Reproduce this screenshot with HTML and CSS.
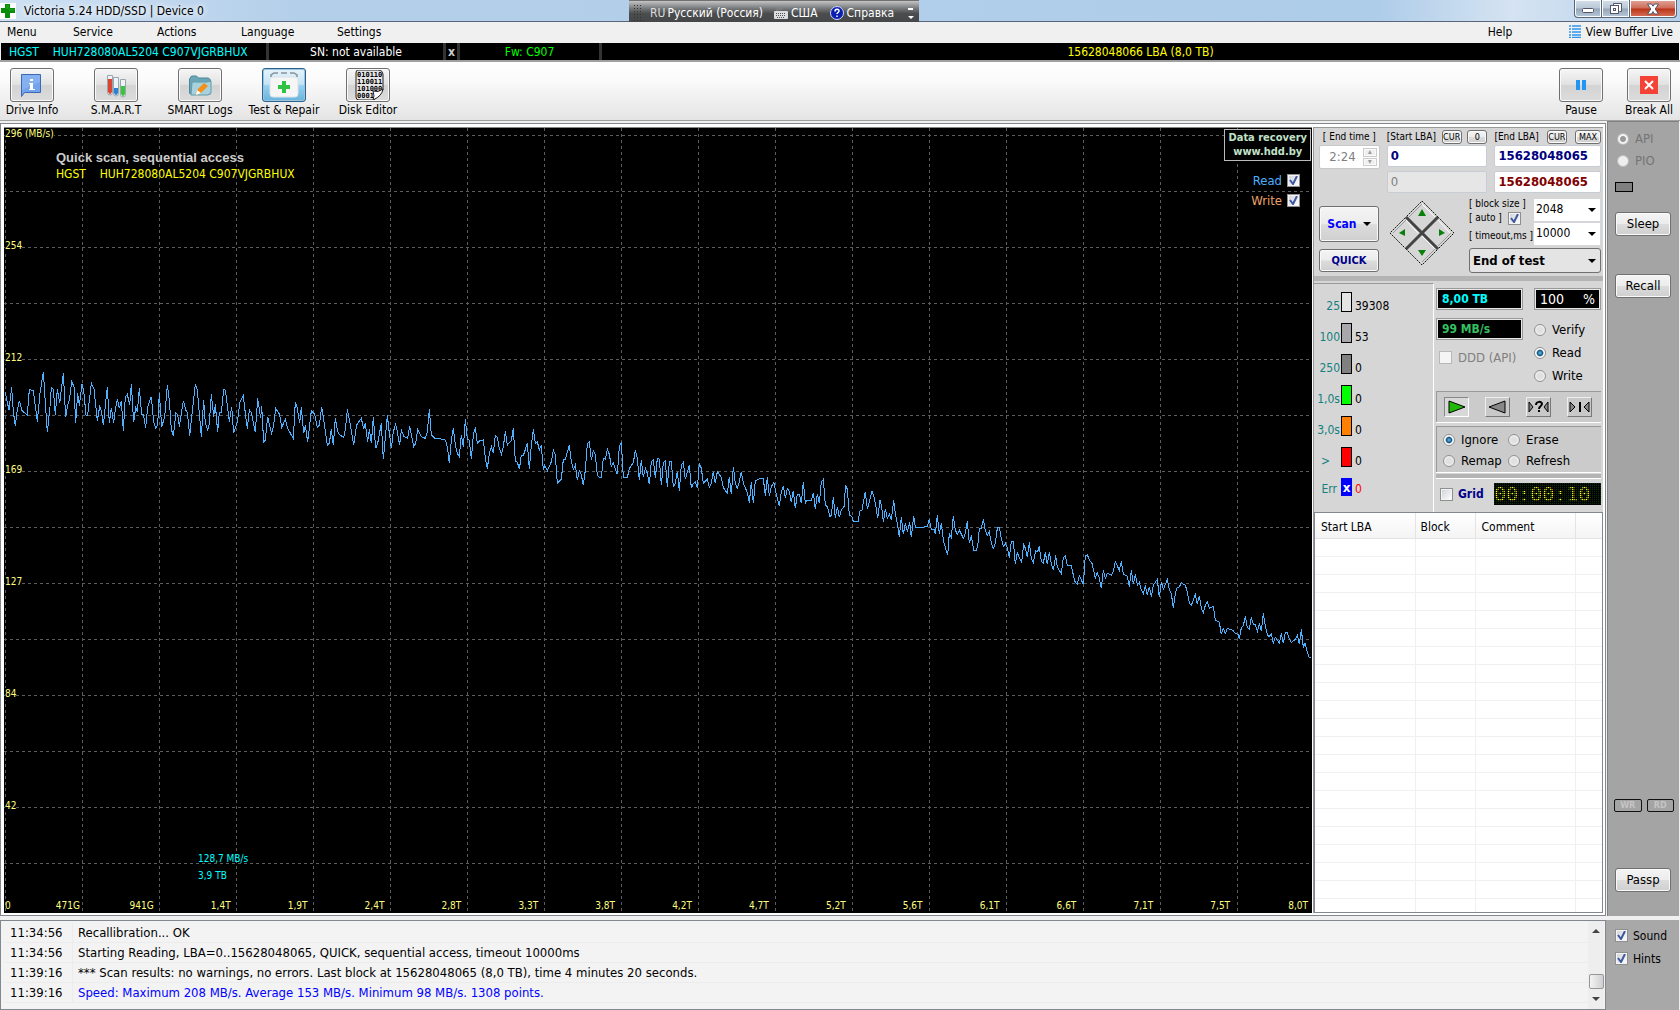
FILE: index.html
```html
<!DOCTYPE html>
<html lang="en">
<head>
  <meta charset="UTF-8">
  <meta name="viewport" content="width=device-width, initial-scale=1.0">
  <title>Victoria 5.24 HDD/SSD</title>
  <link rel="stylesheet" href="styles.css">
</head>
<body>
  <header class="titlebar">
    <svg class="app-icon" width="16" height="16" viewBox="0 0 16 16"><rect width="16" height="16" fill="#fff"/><path d="M5 1h5v4h5v5h-5v5H5v-5H1V5h4z" fill="#0a8a0a"/><path d="M6 2h3v4h5v2H9V6H6z" fill="#12a012"/></svg>
    <span class="title">Victoria 5.24 HDD/SSD | Device 0</span>
    <div class="langbar">
      <span class="grip"></span>
      <span class="lang-code">RU</span>
      <span>Русский (Россия)</span>
      <svg class="keyboard" width="14" height="14" viewBox="0 0 14 14"><path d="M3 5V3h5V1h4" fill="none" stroke="#888"/><rect x="0" y="5" width="14" height="8" rx="1" fill="#ddd"/><path d="M2 7.500h10M2 9.500h10M3 11.500h8" stroke="#555" stroke-dasharray="1 1"/></svg>
      <span>США</span>
      <svg class="help-icon" width="14" height="14" viewBox="0 0 14 14"><circle cx="7" cy="7" r="6.500" fill="#0b1fae" stroke="#cdd6ff"/><path d="M5 5.500c0-3 4-3 4-.5 0 1.500-2 1.500-2 3M7 9.500V11" fill="none" stroke="#fff" stroke-width="1.500"/></svg>
      <span>Справка</span>
      <svg class="lang-more" width="6" height="14" viewBox="0 0 6 14"><path d="M0 2h5v2H0zM0 10h6l-3 3z" fill="#fff"/></svg>
    </div>
    <div class="window-buttons">
      <button class="win" aria-label="Minimize"><svg width="14" height="14" viewBox="0 0 14 14"><rect x="1.500" y="6.500" width="11" height="4" rx="1" fill="#fff" stroke="#535666"/></svg></button>
      <button class="win" aria-label="Restore"><svg width="14" height="14" viewBox="0 0 14 14"><path d="M4.500 3.500v-2h8v8h-2" fill="#fff" stroke="#535666"/><rect x="1.500" y="3.500" width="8" height="8" fill="#fff" stroke="#535666"/><rect x="4.500" y="6.500" width="2" height="2" fill="none" stroke="#535666"/></svg></button>
      <button class="win close" aria-label="Close"><svg width="14" height="14" viewBox="0 0 14 14"><path d="M1.500 2h4L7 4.200 8.500 2h4L9.200 7l3.300 5h-4L7 9.600 5.500 12h-4L4.800 7z" fill="#fff" stroke="#535666"/></svg></button>
    </div>
  </header>

  <nav class="menu">
    <a href="#">Menu</a>
    <a href="#">Service</a>
    <a href="#">Actions</a>
    <a href="#">Language</a>
    <a href="#">Settings</a>
    <a href="#" class="help">Help</a>
    <a href="#" class="buffer"><svg width="12" height="13" viewBox="0 0 12 13"><path d="M0 1h2M3 1h9M0 4h2M3 4h9M0 7h2M3 7h9M0 10h2M3 10h9M0 12.500h2M3 12.500h9" stroke="#2b95f0" stroke-width="1.500"/></svg>View Buffer Live</a>
  </nav>

  <div class="drive-strip">
    <div class="model">HGST &nbsp;&nbsp; HUH728080AL5204 C907VJGRBHUX</div>
    <div class="serial">SN: not available</div>
    <div class="strip-x">x</div>
    <div class="firmware">Fw: C907</div>
    <div class="capacity">15628048066 LBA (8,0 TB)</div>
  </div>

  <div class="toolbar">
    <div class="tool">
      <button id="info" aria-labelledby="info-l"><svg width="40" height="30" viewBox="0 0 40 30"><path d="M9.500 4.500h19v18h-16l-3 4z" fill="#72a3ec" stroke="#3c68b4"/><path d="M10 5h18v7L10 20z" fill="#9abff6" opacity=".5"/><path d="M18 9h3v2h-3zM17 13h4v6h2v1h-6v-1h1v-5h-1z" fill="#fff"/></svg></button>
      <label id="info-l" for="info">Drive Info</label>
    </div>
    <div class="tool">
      <button id="smart" aria-labelledby="smart-l"><svg width="40" height="30" viewBox="0 0 40 30"><g fill="#eef3f6" stroke="#98a6b0"><path d="M11.500 5.500h5v17a2 2 0 0 1-5 0z"/><path d="M17.500 7.500h5v16a2 2 0 0 1-5 0z"/><path d="M24.500 9.500h5v15a2 2 0 0 1-5 0z"/></g><path d="M12 9h4v13q-2 4-4 0z" fill="#dc4433"/><path d="M18 18h4v5q-2 4-4 0z" fill="#2e7fd6"/><path d="M25 16h4v8q-2 4-4 0z" fill="#3cc43c"/></svg></button>
      <label id="smart-l" for="smart">S.M.A.R.T</label>
    </div>
    <div class="tool">
      <button id="logs" aria-labelledby="logs-l"><svg width="40" height="30" viewBox="0 0 40 30"><path d="M9.500 23V9l2-3h5l2 2h10l2 2v14h-20z" fill="#6aa6b8" stroke="#4b8799"/><path d="M12 12h15l4-1v12l-3 2H11z" fill="#a7d1dc" stroke="#5f9cac"/><path d="M16 25l1-5 7-7 4 3-7 7z" fill="#f58f1c"/><path d="M16 25l1-5 4 3z" fill="#fff"/></svg></button>
      <label id="logs-l" for="logs">SMART Logs</label>
    </div>
    <div class="tool">
      <button id="test" class="active" aria-labelledby="test-l"><svg width="40" height="30" viewBox="0 0 40 30"><path d="M7 7v-2l3-2h4m3 0h6m3 0h4l3 2v2" fill="none" stroke="#8a9299" stroke-width="1.500"/><rect x="6" y="7" width="28" height="20" rx="3" fill="#f6f6f6" stroke="#dde3e8"/><path d="M18 11h4v4h4v4h-4v4h-4v-4h-4v-4h4z" fill="#2fc343"/></svg></button>
      <label id="test-l" for="test">Test &amp; Repair</label>
    </div>
    <div class="tool">
      <button id="editor" aria-labelledby="editor-l"><svg width="40" height="30" viewBox="0 0 40 30"><path d="M10 0h20q5 0 5 5v15l-9 10H11q-3 0-3-3V3q0-3 2-3z" fill="#e6e6e6" stroke="#222"/><g class="bits"><text x="9" y="7">010110</text><text x="9" y="14">110011</text><text x="9" y="21">101000</text><text x="9" y="28">0001</text></g><path d="M25 30q2-4 0-9 5 2 10-2-1 7-10 11z" fill="#fff" stroke="#222"/></svg></button>
      <label id="editor-l" for="editor">Disk Editor</label>
    </div>
    <div class="tool pause">
      <button id="pause" aria-labelledby="pause-l"><svg width="40" height="30" viewBox="0 0 40 30"><path d="M15 10h4v10h-4zM21 10h4v10h-4z" fill="#2196f3"/></svg></button>
      <label id="pause-l" for="pause">Pause</label>
    </div>
    <div class="tool break">
      <button id="break" aria-labelledby="break-l"><svg width="40" height="30" viewBox="0 0 40 30"><rect x="11" y="6" width="18" height="18" fill="#f44336"/><path d="M16 11l8 8M24 11l-8 8" stroke="#fff" stroke-width="2"/></svg></button>
      <label id="break-l" for="break">Break All</label>
    </div>
  </div>

  <main class="main">
    <div class="workspace">
      <section class="chart">
        <!-- plot units are thirds of a pixel; grid step is 77 x 56 px -->
        <svg class="plot" viewBox="0 0 3924 2355" preserveAspectRatio="none">
          <path class="grid" d="M4 0V2355M235 0V2355M466 0V2355M697 0V2355M928 0V2355M1159 0V2355M1390 0V2355M1621 0V2355M1852 0V2355M2083 0V2355M2314 0V2355M2545 0V2355M2776 0V2355M3007 0V2355M3238 0V2355M3469 0V2355M3700 0V2355M0 22H3924M0 190H3924M0 358H3924M0 526H3924M0 694H3924M0 862H3924M0 1030H3924M0 1198H3924M0 1366H3924M0 1534H3924M0 1702H3924M0 1870H3924M0 2038H3924M0 2206H3924"/>
          <polyline class="speed" transform="translate(-12 696)" points="16,95 20,118 27,150 35,82 40,155 46,198 50,160 58,122 66,152 82,165 88,88 100,92 112,185 120,100 130,35 136,130 142,217 150,140 154,83 160,88 166,165 172,88 179,130 190,40 197,170 202,140 208,120 215,65 222,80 227,190 233,100 238,137 246,73 251,90 258,165 263,165 274,70 282,88 292,182 299,140 305,155 310,196 322,80 328,190 334,143 341,190 346,148 352,118 358,145 364,122 370,212 376,110 382,103 389,135 394,73 401,187 407,143 412,155 418,85 425,163 430,163 437,203 443,140 454,110 461,187 467,205 473,193 478,98 485,200 494,172 502,76 508,120 514,208 520,227 528,158 533,165 538,200 550,122 557,150 562,157 569,227 578,145 586,73 592,90 604,230 611,120 616,190 623,210 628,190 634,102 641,170 646,133 653,217 658,158 664,157 671,88 676,90 688,185 695,140 701,220 712,185 720,125 730,107 736,160 742,206 748,150 754,158 766,217 773,115 782,175 785,137 791,247 796,240 803,170 808,195 815,220 821,195 827,145 839,163 845,203 856,178 862,203 880,236 886,125 892,145 899,190 904,142 911,220 916,195 923,247 934,152 944,163 952,203 958,195 965,140 971,178 982,256 988,250 994,208 1000,255 1006,175 1013,214 1019,225 1031,232 1036,210 1042,148 1048,178 1061,256 1070,195 1084,175 1091,208 1096,190 1103,245 1108,208 1114,250 1120,172 1127,265 1133,250 1144,190 1150,298 1162,166 1168,220 1174,265 1180,215 1187,193 1192,215 1199,256 1204,211 1212,230 1223,235 1229,199 1241,260 1247,250 1253,208 1264,230 1276,235 1282,215 1288,148 1294,225 1303,234 1320,235"/>
          <polyline class="speed" transform="translate(1308 786)" points="0,146 16,150 22,170 28,220 34,150 40,115 46,165 52,190 58,200 64,135 70,172 76,88 82,148 88,150 94,208 100,135 106,112 112,160 118,153 130,150 136,205 142,236 148,190 154,170 160,190 166,136 172,143 178,175 184,193 190,170 196,124 202,165 214,152 220,115 226,215 232,216 238,238 244,195 250,197 262,160 268,238 274,165 280,118 286,160 292,155 298,180 304,165 310,241 314,225 322,243 334,215 340,181 346,195 352,280 364,268 370,208 376,208 388,165 394,215 400,238 406,225 412,271 418,242 424,255 430,286 436,240 442,162 448,155 454,211 460,182 466,195 472,257 478,262 484,262 490,205 496,207 502,178 508,193 514,230 520,218 526,237 532,253 538,170 544,157 550,262 562,263 568,235 580,218 586,181 592,205 598,271 604,210 610,262 616,235 622,250 628,283 634,215 640,210 646,265 652,205 658,208 664,286 670,218 676,213 682,290 688,215 694,215 700,290 706,280 712,245 718,304 724,225 730,217 736,268 748,225 754,295 760,280 766,275 772,295 778,220 784,235 790,280 802,268 808,292 814,280 820,245 826,280 832,245 844,262 850,293 862,310 868,260 874,313 880,230 886,280 892,295 898,275 904,245 910,280 922,308 928,338 934,275 940,340 946,272 958,267 970,266 976,317 982,262 988,317 994,290 1002,278 1008,310 1018,348 1024,305 1030,287 1036,325 1042,295 1048,305 1054,337 1060,302 1066,355 1072,312 1078,312 1084,340 1090,275 1096,340 1102,330 1114,332 1120,308 1126,358 1132,312 1138,340 1144,275 1150,268 1156,345 1162,350 1170,382 1174,375 1180,320 1186,385 1192,350 1198,382 1204,360 1212,350 1217,284 1222,298 1228,375 1236,380 1240,395 1254,395 1260,362 1266,360 1276,305 1282,357 1288,335 1296,302 1302,320 1308,350 1313,385 1320,330"/>
          <polyline class="speed" transform="translate(2628 996)" points="0,120 5,140 10,187 16,148 22,175 28,163 34,180 41,121 46,162 52,190 58,232 64,170 70,223 76,190 82,215 89,187 94,232 101,168 106,203 125,202 142,200 148,178 154,210 162,207 166,222 172,166 178,222 184,190 190,240 196,263 203,286 208,220 214,232 220,168 226,210 232,223 238,210 250,235 256,220 262,184 268,250 274,226 281,272 288,273 293,260 298,206 304,205 310,178 316,212 322,226 328,215 334,250 340,265 346,250 352,204 358,203 364,235 370,260 376,250 382,263 388,293 394,245 400,244 406,313 412,278 418,293 425,307 431,253 436,265 442,292 448,247 454,295 460,307 467,273 473,275 478,259 484,305 490,310 496,277 502,313 508,277 514,313 520,331 527,286 532,322 544,340 550,292 556,287 562,317 574,317 580,345 586,368 592,373 598,347 604,360 610,373 616,287 622,284 628,300 636,310 646,355 652,338 658,355 664,385 670,331 676,355 682,340 694,345 700,335 706,305 718,331 724,304 730,343 742,349 748,380 754,331 760,372 766,343 772,375 778,367 784,390 790,401 796,376 802,406 808,380 814,410 820,376 832,358 838,412 844,366 850,388 862,358 868,388 874,400 880,445 886,400 892,382 898,381 904,368 916,376 922,395 928,430 934,436 946,404 952,433 958,407 964,445 970,457 976,436 982,425 988,445 1000,439 1006,480 1018,487 1024,523 1030,506 1036,520 1042,505 1060,512 1066,521 1074,523 1078,538 1084,503 1090,497 1096,469 1102,503 1108,508 1114,472 1120,493 1126,493 1132,514 1138,490 1144,514 1150,460 1156,497 1162,524 1168,530 1174,521 1180,550 1186,532 1198,550 1204,520 1210,550 1216,518 1222,517 1228,538 1234,547 1246,538 1252,526 1258,553 1264,508 1270,562 1275,550 1282,578 1288,592 1292,593"/>
        </svg>
        <div class="y-axis">
          <span>296 (MB/s)</span><span>254</span><span>212</span><span>169</span><span>127</span><span>84</span><span>42</span>
        </div>
        <div class="x-axis">
          <span class="first"><span>0</span>471G</span><span>941G</span><span>1,4T</span><span>1,9T</span><span>2,4T</span><span>2,8T</span><span>3,3T</span><span>3,8T</span><span>4,2T</span><span>4,7T</span><span>5,2T</span><span>5,6T</span><span>6,1T</span><span>6,6T</span><span>7,1T</span><span>7,5T</span><span class="last">8,0T</span>
        </div>
        <div class="chart-title">
          <strong>Quick scan, sequential access</strong>
          <span>HGST &nbsp;&nbsp; HUH728080AL5204 C907VJGRBHUX</span>
        </div>
        <div class="legend">
          <a href="#" class="promo">Data recovery<br>www.hdd.by</a>
          <label class="l-read">Read <input type="checkbox" checked></label>
          <label class="l-write">Write <input type="checkbox" checked></label>
        </div>
        <div class="cursor-info">128,7 MB/s<br>3,9 TB</div>
      </section>

      <aside class="controls">
        <section class="scan-panel">
          <div class="lba">
            <div class="col time">
              <div class="head"><label for="endtime">[ End time ]</label></div>
              <div class="spin">
                <input id="endtime" type="text" value="2:24" disabled>
                <div class="spin-buttons"><button disabled aria-label="Up">▴</button><button disabled aria-label="Down">▾</button></div>
              </div>
            </div>
            <div class="col start">
              <div class="head"><label for="start">[Start LBA]</label><button class="mini">CUR</button><button class="mini">0</button></div>
              <input id="start" class="num" type="text" value="0">
              <input class="num" type="text" value="0" aria-label="Current start" disabled>
            </div>
            <div class="col end">
              <div class="head"><label for="end">[End LBA]</label><button class="mini">CUR</button><button class="mini max">MAX</button></div>
              <input id="end" class="num" type="text" value="15628048065">
              <input class="num red" type="text" value="15628048065" aria-label="Last LBA">
            </div>
          </div>
          <div class="scan-row">
            <div class="scan-buttons">
              <button class="scan">Scan <i class="caret"></i></button>
              <button class="quick">QUICK</button>
            </div>
            <svg class="diamond" width="66" height="66" viewBox="0 0 66 66">
              <g fill="#d6d6d6" stroke="#111" stroke-dasharray="2 1"><path d="M33 1l16 16-16 16-16-16z"/><path d="M49 17l16 16-16 16-16-16z"/><path d="M17 17l16 16-16 16L1 33z"/><path d="M33 33l16 16-16 16-16-16z"/></g>
              <path d="M17 17l32 32M49 17L17 49" stroke="#444" stroke-width="3"/>
              <path d="M17 20l12 13M33 4l13 13M49 20l12 13M33 36l13 13" stroke="#fff" fill="none"/>
              <path d="M4 33l13-13M20 17L33 4M33 62l13-13M49 46l13-13" stroke="#999" fill="none"/>
              <path d="M33 9l4 7h-8zM33 56l4-6h-8zM10 33l6-4v7zM56 33l-6-4v7z" fill="#0a800a"/>
            </svg>
            <div class="options">
              <div class="option-grid">
                <div class="option-labels">
                  <label for="block">[ block size ]</label>
                  <label>[ auto ] <input type="checkbox" checked></label>
                  <label for="timeout">[ timeout,ms ]</label>
                </div>
                <div class="option-fields">
                  <select id="block"><option>2048</option></select>
                  <select id="timeout"><option>10000</option></select>
                </div>
              </div>
              <select class="finish" aria-label="After scan"><option>End of test</option></select>
            </div>
          </div>
        </section>

        <section class="status-panel">
          <div class="counters">
            <div class="counter"><span class="ms">25</span><i class="box b25"></i><span>39308</span></div>
            <div class="counter"><span class="ms">100</span><i class="box b100"></i><span>53</span></div>
            <div class="counter"><span class="ms">250</span><i class="box b250"></i><span>0</span></div>
            <div class="counter"><span class="ms">1,0s</span><i class="box b1s"></i><span>0</span></div>
            <div class="counter"><span class="ms">3,0s</span><i class="box b3s"></i><span>0</span></div>
            <div class="counter"><span class="ms gt">&gt;</span><i class="box bover"></i><span>0</span></div>
            <div class="counter err"><span class="ms">Err</span><i class="box berr">x</i><span>0</span></div>
          </div>
          <div class="run">
            <div class="run-top">
              <div class="readouts">
                <div class="lcd cyan">8,00 TB</div>
                <div class="lcd green">99 MB/s</div>
                <label class="ddd"><input type="checkbox" disabled>DDD (API)</label>
              </div>
              <div class="modes">
                <div class="lcd percent"><span>100</span><span>%</span></div>
                <label><input type="radio" name="mode">Verify</label>
                <label><input type="radio" name="mode" checked>Read</label>
                <label><input type="radio" name="mode">Write</label>
              </div>
            </div>
            <div class="group player">
              <button class="down" aria-label="Forward"><svg width="21" height="16" viewBox="0 0 21 16"><path d="M3 2l16 6-16 6z" fill="#22b80a" stroke="#000"/></svg></button>
              <button aria-label="Backward"><svg width="21" height="16" viewBox="0 0 21 16"><path d="M18 2L2 8l16 6z" fill="#888" stroke="#000"/></svg></button>
              <button aria-label="Random"><svg width="21" height="16" viewBox="0 0 21 16"><path d="M1 3l4 5-4 5zM20 3l-4 5 4 5z" fill="#888" stroke="#000"/><path d="M8 6c0-4 6-4 6-1 0 2-3 2-3 5M11 11v2" fill="none" stroke="#000" stroke-width="2"/></svg></button>
              <button aria-label="Butterfly"><svg width="21" height="16" viewBox="0 0 21 16"><path d="M1 3l5 5-5 5zM20 3l-5 5 5 5z" fill="#888" stroke="#000"/><path d="M10 3h2v10h-2z"/></svg></button>
            </div>
            <div class="group actions">
              <label><input type="radio" name="action" checked>Ignore</label>
              <label><input type="radio" name="action">Erase</label>
              <label><input type="radio" name="action">Remap</label>
              <label><input type="radio" name="action">Refresh</label>
            </div>
            <div class="band"></div>
            <div class="grid-row">
              <label><input type="checkbox">Grid</label>
              <div class="clock">00:00:10</div>
            </div>
          </div>
        </section>

        <div class="defects">
          <table>
            <thead><tr><th class="c1">Start LBA</th><th class="c2">Block</th><th class="c3">Comment</th><th></th></tr></thead>
            <tbody>
              <tr><td></td><td></td><td></td><td></td></tr><tr><td></td><td></td><td></td><td></td></tr><tr><td></td><td></td><td></td><td></td></tr><tr><td></td><td></td><td></td><td></td></tr><tr><td></td><td></td><td></td><td></td></tr>
              <tr><td></td><td></td><td></td><td></td></tr><tr><td></td><td></td><td></td><td></td></tr><tr><td></td><td></td><td></td><td></td></tr><tr><td></td><td></td><td></td><td></td></tr><tr><td></td><td></td><td></td><td></td></tr>
              <tr><td></td><td></td><td></td><td></td></tr><tr><td></td><td></td><td></td><td></td></tr><tr><td></td><td></td><td></td><td></td></tr><tr><td></td><td></td><td></td><td></td></tr><tr><td></td><td></td><td></td><td></td></tr>
              <tr><td></td><td></td><td></td><td></td></tr><tr><td></td><td></td><td></td><td></td></tr><tr><td></td><td></td><td></td><td></td></tr><tr><td></td><td></td><td></td><td></td></tr><tr><td></td><td></td><td></td><td></td></tr>
              <tr><td></td><td></td><td></td><td></td></tr>
            </tbody>
          </table>
        </div>
      </aside>
    </div>

    <aside class="side">
      <label><input type="radio" name="io" checked disabled>API</label>
      <label><input type="radio" name="io" disabled>PIO</label>
      <i class="led"></i>
      <button class="sleep">Sleep</button>
      <button class="recall">Recall</button>
      <div class="leds"><span>WR</span><span>RD</span></div>
      <button class="passp">Passp</button>
    </aside>
  </main>

  <footer class="bottom">
    <div class="log">
      <div class="log-lines">
        <div class="line"><time>11:34:56</time><span>Recallibration... OK</span></div>
        <div class="line"><time>11:34:56</time><span>Starting Reading, LBA=0..15628048065, QUICK, sequential access, timeout 10000ms</span></div>
        <div class="line"><time>11:39:16</time><span>*** Scan results: no warnings, no errors. Last block at 15628048065 (8,0 TB), time 4 minutes 20 seconds.</span></div>
        <div class="line blue"><time>11:39:16</time><span>Speed: Maximum 208 MB/s. Average 153 MB/s. Minimum 98 MB/s. 1308 points.</span></div>
      </div>
      <div class="scrollbar"><i class="up"></i><i class="thumb"></i><i class="dn"></i></div>
    </div>
    <div class="toggles">
      <label><input type="checkbox" checked>Sound</label>
      <label><input type="checkbox" checked>Hints</label>
    </div>
  </footer>
</body>
</html>
```
FILE: styles.css
```css
* { box-sizing: border-box; }
body { margin: 0; min-height: 100vh; display: flex; flex-direction: column; background: #f0f0f0; color: #000; font: 12px/14px Tahoma, "DejaVu Sans Condensed", sans-serif; }
button, input, select { font: inherit; color: inherit; margin: 0; padding: 0; }
a { color: inherit; text-decoration: none; }
svg { display: block; }
label { white-space: nowrap; }

button { border: 1px solid #707070; border-radius: 3px; background: linear-gradient(#f4f4f4, #ececec 48%, #dcdcdc 52%, #cfcfcf); box-shadow: inset 0 0 0 1px #fafafa; }

input[type=checkbox] { appearance: none; flex: none; width: 13px; height: 13px; border: 1px solid #8e8f8f; background: linear-gradient(135deg, #cdd2d8, #fff); box-shadow: inset 0 0 0 1px #f4f4f4; }
input[type=checkbox]:checked { background: url("data:image/svg+xml,%3Csvg xmlns='http://www.w3.org/2000/svg' viewBox='0 0 11 11'%3E%3Cpath d='M2 5l3 4 4-8' fill='none' stroke='%234058a0' stroke-width='2'/%3E%3C/svg%3E"), linear-gradient(135deg, #cdd2d8, #fff); }
input[type=checkbox]:disabled { border-color: #b8b8b8; background: #f4f4f4; }
input[type=radio] { appearance: none; flex: none; width: 12px; height: 12px; border: 1px solid #909090; border-radius: 50%; background: radial-gradient(#e0e0e0 35%, #fff); }
input[type=radio]:checked { background: radial-gradient(#5cc8f0 0, #17527e 38%, #fff 55%); }
input[type=radio]:disabled { border-color: #bbb; background: #eee; }
input[type=radio]:disabled:checked { background: radial-gradient(#999 35%, #f2f2f2 50%); }

/* title bar */
.titlebar { position: relative; display: flex; align-items: center; height: 22px; border-bottom: 1px solid #57667a; background: linear-gradient(90deg, #cfe1f3, #b4cfea 18%, #aecde9 82%, #d5e3f2 90%, #b5d0eb); }
.app-icon { margin-right: 4px; }
.title { padding: 0 4px; text-shadow: 0 0 6px #fff, 0 0 6px #fff; }
.langbar { position: absolute; top: 0; left: 629px; height: 22px; display: flex; align-items: center; padding: 3px 5px 0 4px; border-top: 1px solid #707070; background: linear-gradient(#c4c4c4, #77797b 35%, #4a4c4e 60%, #454749); color: #fff; }
.grip { width: 9px; height: 18px; margin-right: 8px; background: radial-gradient(circle, #333 1px, transparent 1px) 0 0 / 3px 3px; }
.lang-code { margin-right: 2px; color: #ddd; }
.keyboard { margin: 0 3px 0 11px; }
.help-icon { margin: 0 3px 0 12px; }
.lang-more { margin-left: 14px; }
.window-buttons { display: flex; align-self: flex-start; margin: 0 3px 0 auto; height: 18px; }
.win { display: flex; justify-content: center; align-items: center; width: 28px; border: 1px solid #566577; border-top: 0; border-left-width: 0; border-radius: 0; background: linear-gradient(#d4dfea, #b9c7d6 48%, #95a6b8 52%, #b6c8da); }
.win:first-child { border-left-width: 1px; border-radius: 0 0 0 4px; }
.close { width: 47px; border-radius: 0 0 4px 0; background: linear-gradient(#e0a79c, #cf6a57 48%, #b93318 52%, #d8735a); }

.menu { display: grid; grid-template-columns: 66px 84px 84px 96px 1fr 81px auto; align-items: center; height: 21px; padding: 0 7px 2px; }
.buffer { display: flex; align-items: center; gap: 5px; }

.drive-strip { display: flex; height: 17px; margin: 0 1px; background: #000; line-height: 18px; text-align: center; }
.drive-strip div { border-right: 3px solid #333; }
.drive-strip .model { width: 268px; padding-left: 8px; color: #0ff; text-align: left; white-space: nowrap; }
.drive-strip .serial { width: 177px; color: #fff; }
.drive-strip .strip-x { width: 14px; color: #ccc; font-weight: bold; }
.drive-strip .firmware { width: 142px; color: #0f0; }
.drive-strip .capacity { flex: 1; border: 0; color: #ff0; }

/* toolbar */
.toolbar { display: flex; gap: 40px; height: 61px; padding: 6px 9px 0 10px; border: solid #a0a0a0; border-width: 2px 0 1px; background: linear-gradient(#fff, #fbfbfb 30%, #e4e4e4); }
.tool { display: flex; flex-direction: column; align-items: center; gap: 1px; width: 44px; }
.tool button { width: 44px; height: 34px; padding: 1px; background: linear-gradient(#f6f6f6, #e2e2e2 48%, #d3d3d3 52%, #dcdcdc); }
.tool .active { border-color: #2c628b; background: linear-gradient(#e5f4fc, #c4e5f6 48%, #98d1ef 52%, #68b3db); box-shadow: inset 0 0 0 1px #9cc4dc; }
.bits { font: bold 7px "DejaVu Sans Mono", monospace; }
.pause { margin-left: auto; }
.break { margin-left: -16px; }

/* workspace */
.main { flex: 1; display: flex; margin: 2px 0 4px; }
.workspace { flex: 1; display: flex; gap: 1px; min-width: 0; margin-right: 1px; padding: 3px 2px 2px 3px; border: 1px solid #828790; background: #fff; }
.chart { flex: 1; position: relative; display: flex; min-width: 0; border-top: 1px solid #888; background: #000; color: #ffff80; }
.plot { position: absolute; width: 100%; height: 100%; }
.plot * { fill: none; vector-effect: non-scaling-stroke; shape-rendering: crispEdges; }
.grid { stroke: #5c5c5c; stroke-dasharray: 3 3; }
.speed { stroke: #4db1ff; }
.y-axis { position: absolute; inset: 0 auto 1px 0; display: grid; grid-template-rows: repeat(7, 1fr); justify-items: start; align-items: start; padding-left: 1px; font-size: 10px; line-height: 12px; }
.y-axis span { background: #000; }
.x-axis { position: absolute; inset: auto 0 1px; display: grid; grid-template-columns: repeat(17, 1fr); padding-left: 1px; font-size: 10px; line-height: 13px; text-align: right; }
.x-axis > span { padding-right: 5px; }
.x-axis .first { display: flex; justify-content: space-between; padding-right: 2px; }
.x-axis .last { padding-right: 4px; }
.chart-title { position: absolute; top: 21px; left: 52px; display: grid; color: #ff0; line-height: 17px; }
.chart-title strong { color: #ccc; font: bold 13px/17px "Liberation Sans", Arial, sans-serif; }
.legend { position: absolute; top: 1px; right: 1px; display: flex; flex-direction: column; align-items: flex-end; gap: 7px; font-size: 13px; }
.legend label { display: flex; align-items: center; gap: 5px; margin-right: 11px; height: 13px; }
.promo { margin-bottom: 6px; padding: 1px 3px; border: 1px solid #bbb; background: #000; color: #c0e0c8; font-size: 11px; font-weight: bold; line-height: 14px; text-align: center; }
.l-read { color: #4db1ff; }
.l-write { color: #eba06a; }
.cursor-info { position: absolute; left: 194px; bottom: 29px; color: #0ff; font-size: 10px; line-height: 17px; }

.controls { flex: none; width: 290px; display: flex; flex-direction: column; background: #d6d6d6; border-left: 1px solid #999; }

.scan-panel { padding: 2px 2px 3px 5px; border-top: 1px solid #999; }
.lba { display: flex; gap: 7px; }
.col { display: flex; flex-direction: column; gap: 4px; }
.time { width: 61px; }
.start { width: 101px; }
.end { width: 107px; }
.head { display: flex; justify-content: space-between; align-items: center; height: 14px; margin-bottom: -3px; font-size: 10px; }
.time .head { justify-content: center; }
.mini { width: 20px; height: 14px; font-size: 9px; line-height: 10px; }
.max { width: 26px; }
.num { width: 100%; height: 22px; padding: 0 3px 2px; border: 1px solid #c8ccd4; border-radius: 2px; background: #fff; color: #000080; font-size: 13px; font-weight: bold; }
.num.red { color: #800000; }
.num:disabled { background: #e6e6e6; color: #808080; font-weight: normal; }
.spin { display: flex; height: 24px; padding: 2px; border: 1px solid #c8c8c8; border-radius: 2px; background: #fff; }
.spin input { width: 41px; border: 0; background: none; color: #808080; font-size: 13px; text-align: center; }
.spin-buttons { display: grid; gap: 1px; flex: 1; }
.spin button { border: 1px solid #ccc; border-radius: 0; font-size: 8px; line-height: 6px; color: #999; background: #f0f0f0; }

.scan-row { display: flex; margin-top: 5px; }
.scan-buttons { display: grid; align-content: start; gap: 7px; width: 60px; padding-top: 8px; }
.scan { display: flex; justify-content: center; align-items: center; gap: 6px; height: 36px; color: #00f; font-weight: bold; }
.caret { border: 4px solid transparent; border-top-color: #000; border-bottom: 0; }
.quick { height: 23px; color: #00008b; font-size: 11px; font-weight: bold; }
.diamond { flex: none; margin: 2px 14px 0 10px; }
.options { flex: 1; display: grid; gap: 2px; }
.option-grid { display: flex; justify-content: space-between; }
.option-labels { display: grid; grid-template-rows: 11px 18px 17px; align-items: center; font-size: 10px; }
.option-labels label { display: flex; align-items: center; gap: 6px; }
.option-fields { width: 68px; }
select { appearance: none; width: 100%; height: 24px; padding: 0 3px; border: 1px solid #d4d6da; border-radius: 0; background: url("data:image/svg+xml,%3Csvg xmlns='http://www.w3.org/2000/svg' width='8' height='4'%3E%3Cpath d='M0 0h8L4 4z'/%3E%3C/svg%3E") no-repeat right 4px center #fff; }
.option-fields select { padding: 0 2px 2px; }
select.finish { height: 25px; border-color: #707070; border-radius: 3px; background-color: #e4e4e4; font-size: 13px; font-weight: bold; }

.status-panel { display: flex; border-top: 5px solid #b4b4b4; height: 236px; }
.counters { width: 120px; margin-top: 2px; padding: 8px 0 0 1px; border: solid #999; border-width: 1px 0 0; border-right: 1px solid #fff; }
.counter { display: flex; align-items: flex-start; gap: 3px; height: 31px; }
.counter span { line-height: 28px; }
.ms { width: 25px; margin-right: -2px; color: #148080; text-align: right; }
.gt { padding-right: 10px; }
.box { width: 11px; height: 20px; border: 1px solid #000; }
.b25 { background: #e4e4e4; }
.b100 { background: #a8a8ac; }
.b250 { background: #808080; }
.b1s { background: #0f0; }
.b3s { background: #ff8000; }
.bover { background: #f00; }
.err span { line-height: 22px; }
.err .ms { padding-right: 3px; }
.berr { height: 18px; border: 0; background: #00f; color: #fff; font: bold 12px/20px "DejaVu Sans", sans-serif; text-align: center; }
.err span:last-child { color: #f00; }

.run { flex: 1; padding: 5px 2px 0; margin-top: 2px; }
.run-top { display: flex; justify-content: space-between; height: 103px; }
.readouts { width: 87px; }
.modes { width: 67px; font-size: 13px; }
.lcd { height: 22px; margin-bottom: 8px; padding: 0 4px; border: 2px solid #e8e8e8; outline: 1px solid #999; outline-offset: -1px; background: #000; font-weight: bold; line-height: 18px; }
.cyan { color: #0ff; }
.green { color: #34c060; }
.percent { display: flex; justify-content: space-between; margin-bottom: 8px; color: #fff; font-size: 14px; font-weight: normal; }
.modes label, .ddd { display: flex; align-items: center; gap: 6px; height: 23px; }
.ddd { color: #808080; margin: -2px 0 0 3px; font-size: 13px; }
.group { border: solid #999; border-width: 1px 0 0 1px; box-shadow: 0 1px #fff; background: #cbcbcb; }
.player { display: flex; gap: 16px; height: 31px; padding: 5px 7px; }
.player button { width: 25px; height: 20px; padding: 1px; border: 1px solid; border-color: #eee #777 #777 #eee; border-radius: 0; background: #c8c8c8; box-shadow: none; }
.player .down { border-color: #888 #fff #fff #888; background: #d8d8d8; }
.actions { display: grid; grid-template-columns: 65px 1fr; height: 46px; margin-top: 4px; padding: 2px 6px 1px; font-size: 13px; }
.actions label { display: flex; align-items: center; gap: 6px; }
.band { height: 5px; margin-top: 2px; border-bottom: 1px solid #fff; background: #b4b4b4; }
.grid-row { display: flex; justify-content: space-between; align-items: center; margin-top: 4px; padding-left: 4px; }
.grid-row label { display: flex; align-items: center; gap: 5px; color: #00008b; font-weight: bold; }
.clock { position: relative; width: 107px; height: 22px; background: linear-gradient(90deg, transparent 1px, #000 1px) 0 0 / 2px 2px, #0c2e0c; color: #ffff20; font: 20px/22px "DejaVu Sans Mono", monospace; }
/* dot matrix mask over the digits */
.clock::after { content: ""; position: absolute; inset: 0; background: linear-gradient(90deg, transparent 1px, rgba(0, 0, 0, 0.6) 1px) 0 0 / 2px 2px, linear-gradient(transparent 1px, rgba(0, 0, 0, 0.8) 1px) 0 0 / 2px 2px; }

/* takes the leftover height, extra rows are clipped */
.defects { flex: 1; height: 0; flex-basis: auto; border: 1px solid #828790; background: #fff; overflow: hidden; }
table { width: 100%; table-layout: fixed; border-collapse: collapse; }
th { height: 25px; padding: 3px 6px 0; font-weight: normal; text-align: left; border: solid #e4e4e4; border-width: 0 1px 1px 0; background: linear-gradient(#fff, #f4f4f4); }
td { height: 18px; padding: 0; border: solid #f0f0f0; border-width: 0 1px 1px 0; }
th:last-child, td:last-child { border-right: 0; }
.c1 { width: 100px; }
.c2 { width: 60px; padding-left: 5px; }
.c3 { width: 100px; }

.side { flex: none; display: flex; flex-direction: column; width: 72px; margin: -2px 1px 0 0; padding: 6px 7px 24px; border: solid #808080; border-width: 1px 0 0 1px; background: #a4a4a4; font-size: 13px; }
.side label { display: flex; align-items: center; gap: 6px; height: 22px; margin-left: 2px; color: #747474; }
.led { width: 18px; height: 10px; margin-top: 10px; border: 1px solid #000; background: #808080; }
.side button { height: 24px; margin-right: 1px; }
.sleep { margin-top: 20px; }
.recall { margin-top: 38px; }
.leds { display: flex; gap: 5px; margin: auto -2px 0 -1px; }
.leds span { flex: 1; height: 13px; border: 1px solid #111; border-radius: 2px; color: #c4c4c4; font-size: 9px; font-weight: bold; line-height: 11px; text-align: center; }
.passp { margin-top: 56px; }

/* log */
.bottom { display: flex; height: 90px; font-size: 13px; }
.log { flex: 1; display: flex; border: 1px solid #828790; background: #f3f3f3; }
.log-lines { flex: 1; padding: 2px 0 0 2px; }
.line { display: flex; height: 20px; border-bottom: 1px solid #ececec; line-height: 20px; }
.line time { width: 70px; padding-left: 7px; border-right: 1px solid #ececec; color: #000; }
.line span { padding-left: 5px; }
.blue { color: #00f; }
.scrollbar { display: flex; flex-direction: column; align-items: center; width: 16px; margin-right: 1px; padding: 8px 0; background: #eee; }
.up { border: 4px solid transparent; border-bottom-color: #444; border-top: 0; }
.thumb { width: 15px; height: 15px; margin-top: auto; border: 1px solid #979797; border-radius: 2px; background: linear-gradient(90deg, #f3f3f3, #cfcfd2); }
.dn { margin-top: 8px; border: 4px solid transparent; border-top-color: #444; border-bottom: 0; }
.toggles { width: 73px; margin-right: 1px; padding: 4px 0 0 9px; background: #a8a8a8; }
.toggles label { display: flex; align-items: center; gap: 5px; height: 23px; font-size: 12px; }
```
